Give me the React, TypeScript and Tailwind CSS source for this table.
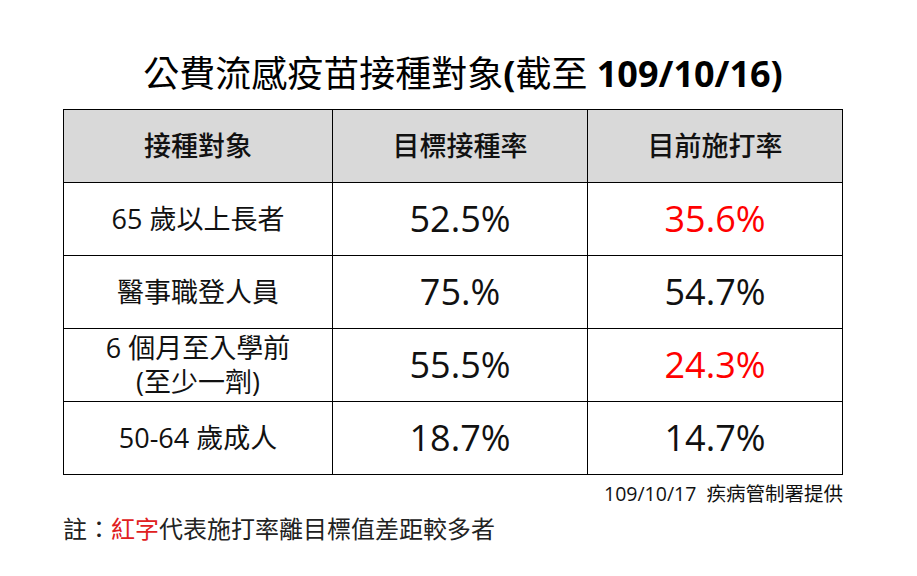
import React from "react";

const font = { fontFamily: "'Open Sans', 'Noto Sans CJK TC', sans-serif" };

const rows: { label: React.ReactNode; target: string; current: string; red: boolean }[] = [
  { label: "65 歲以上長者", target: "52.5%", current: "35.6%", red: true },
  { label: "醫事職登人員", target: "75.%", current: "54.7%", red: false },
  {
    label: (
      <div className="leading-[34px]">
        <div>6 個月至入學前</div>
        <div>(至少一劑)</div>
      </div>
    ),
    target: "55.5%",
    current: "24.3%",
    red: true,
  },
  { label: "50-64 歲成人", target: "18.7%", current: "14.7%", red: false },
];

export default function App() {
  return (
    <div className="w-[917px] h-[576px] bg-white text-[#111]" style={font}>
      <div className="pt-[51px] ml-[63px] w-[780px] pl-[20px] text-center text-[36px] leading-[46px] text-black whitespace-nowrap">
        <span>公費流感疫苗接種對象</span>
        <span className="font-bold">(</span>
        <span>截至</span>
        <span className="font-bold"> 109/10/16)</span>
      </div>
      <table className="mt-[12px] ml-[63px] w-[780px] table-fixed border-collapse border border-black">
        <colgroup>
          <col className="w-[269px]" />
          <col className="w-[255px]" />
          <col className="w-[255px]" />
        </colgroup>
        <thead>
          <tr className="h-[73px] bg-[#d9d9d9] text-[27px]">
            <th className="border border-black font-medium">接種對象</th>
            <th className="border border-black font-medium">目標接種率</th>
            <th className="border border-black font-medium">目前施打率</th>
          </tr>
        </thead>
        <tbody>
          {rows.map((r, i) => (
            <tr key={i} className="h-[73px]">
              <td className="border border-black text-center text-[27px]">{r.label}</td>
              <td className="border border-black text-center text-[36px]">{r.target}</td>
              <td className={`border border-black text-center text-[36px] ${r.red ? "text-[#ff0000]" : ""}`}>{r.current}</td>
            </tr>
          ))}
        </tbody>
      </table>
      <div className="ml-[63px] w-[780px] text-right text-[19.5px] leading-[28px] mt-[5px]">
        109/10/17&nbsp;&nbsp;疾病管制署提供
      </div>
      <div className="ml-[63px] mt-[5px] text-[24px] leading-[32px] text-[#222]">
        註：<span className="text-[#e02020]">紅字</span>代表施打率離目標值差距較多者
      </div>
    </div>
  );
}
